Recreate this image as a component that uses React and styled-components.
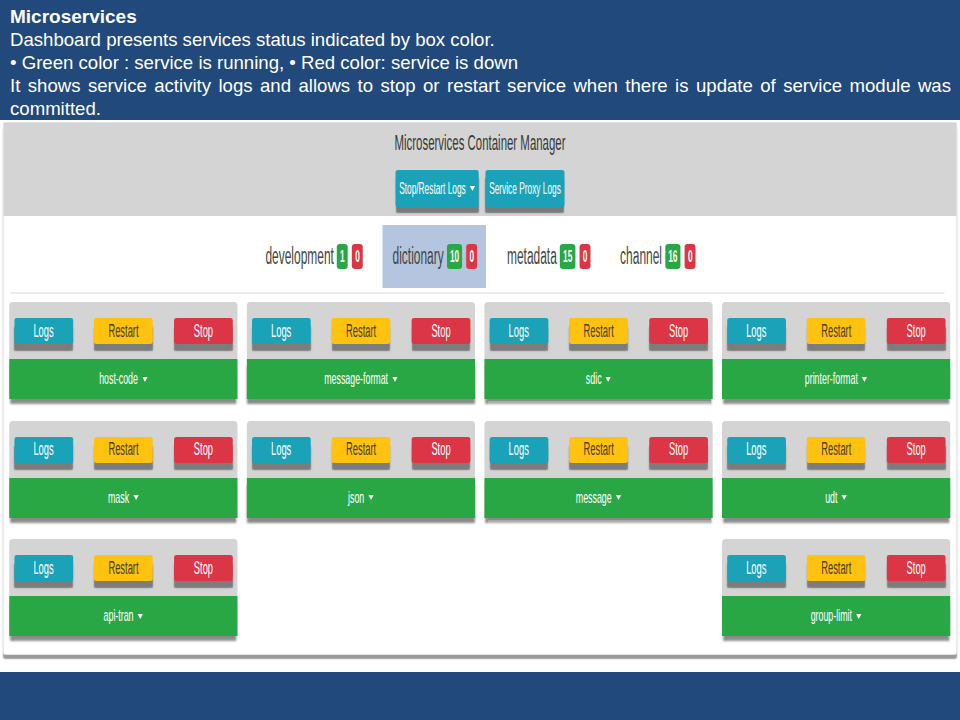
import styled, { createGlobalStyle } from "styled-components";

const GlobalStyle = createGlobalStyle`
  html, body {
    margin: 0;
    padding: 0;
    background: #ffffff;
  }
`;

// the dashboard capture in the slide is squeezed horizontally,
// so the frame is laid out wide and scaled down on x
const SQUEEZE = 954 / 1835;

const Page = styled.div`
  width: 960px;
  height: 720px;
  display: flex;
  flex-direction: column;
  overflow: hidden;
  font-family: "Liberation Sans", Arial, sans-serif;
`;

const Banner = styled.div`
  height: 120px;
  box-sizing: border-box;
  padding: 5px 9px 0 10px;
  background: #21497b;
  color: #ffffff;
  font-size: 18.6px;
  line-height: 23px;
`;

const BannerTitle = styled.div`
  font-weight: bold;
  font-size: 19px;
`;

const Justified = styled.div`
  text-align: justify;
`;

const Shot = styled.div`
  flex: 1;
  background: #ffffff;
  padding: 2px 3px 0 3px;
`;

const Squeeze = styled.div`
  width: 954px;
`;

const Frame = styled.div`
  width: 1835px;
  box-sizing: border-box;
  transform: scaleX(${SQUEEZE});
  transform-origin: 0 0;
  background: #ffffff;
  border: 1px solid #e2e2e2;
  border-radius: 6px / 3px;
  padding-bottom: 18px;
  box-shadow: 0 5px 2px -1px #9a9a9a;
`;

const Header = styled.div`
  height: 93px;
  background: #d4d4d4;
  display: flex;
  flex-direction: column;
  align-items: center;
  padding-top: 7px;
  box-sizing: border-box;
`;

const HeaderTitle = styled.div`
  font-size: 22px;
  line-height: 26px;
  color: #3a3a3a;
`;

const HeaderButtons = styled.div`
  display: flex;
  gap: 13px;
  margin-top: 14px;
`;

const TealButton = styled.div`
  height: 37px;
  padding: 0 7px;
  display: flex;
  align-items: center;
  background: #1aa2b8;
  color: #ffffff;
  font-size: 16px;
  border-radius: 5px / 2px;
  box-shadow: 0 7px 2px -1px #7a7a7a;
`;

const Tabs = styled.div`
  display: flex;
  justify-content: center;
  gap: 21px;
  margin-top: 9px;
`;

const Tab = styled.div`
  height: 63px;
  display: flex;
  align-items: center;
  gap: 8px;
  padding: 0 17px 0 19px;
  background: ${(p) => (p.$active ? "#b4c6df" : "transparent")};
  color: #454545;
  font-size: 23px;
`;

const TabLabel = styled.span`
  margin-right: -2px;
`;

const Badge = styled.span`
  height: 25px;
  padding: 0 6px;
  display: inline-flex;
  align-items: center;
  justify-content: center;
  border-radius: 6px / 3px;
  background: ${(p) => (p.$tone === "red" ? "#dc3545" : "#28a745")};
  color: #ffffff;
  font-size: 16px;
  font-weight: bold;
`;

const Divider = styled.div`
  height: 2px;
  margin: 4px 23px 0 13px;
  background: #ececec;
`;

const Grid = styled.div`
  display: grid;
  grid-template-columns: repeat(4, 438.5px);
  column-gap: 18.5px;
  row-gap: 21.5px;
  padding: 8px 0 0 11px;
`;

const Card = styled.div`
  display: flex;
  flex-direction: column;
`;

const CardTop = styled.div`
  height: 57px;
  box-sizing: border-box;
  padding: 16px 8.5px 0 9.5px;
  background: #d4d4d4;
  border-radius: 7px 7px 0 0 / 4px 4px 0 0;
  display: flex;
  justify-content: space-between;
  align-items: flex-start;
`;

const ActionButton = styled.div`
  width: 113px;
  height: 26px;
  display: flex;
  align-items: center;
  justify-content: center;
  border-radius: 5px / 2px;
  background: ${(p) => p.$bg};
  color: ${(p) => p.$fg};
  font-size: 18px;
  box-shadow: 0 8px 2px -1px #7c7c7c;
`;

const ServiceBar = styled.div`
  height: 40px;
  display: flex;
  align-items: center;
  justify-content: center;
  background: #29a745;
  color: #ffffff;
  font-size: 17px;
  box-shadow: 0 6px 3px -1px #8a8a8a;
`;

const Caret = styled.span`
  width: 0;
  height: 0;
  margin-left: 8px;
  border-left: 5px solid transparent;
  border-right: 5px solid transparent;
  border-top: 5px solid #ffffff;
`;

const Footer = styled.div`
  height: 48px;
  background: #21497b;
`;

const tabs = [
  { name: "development", up: 1, down: 0 },
  { name: "dictionary", up: 10, down: 0, active: true },
  { name: "metadata", up: 15, down: 0 },
  { name: "channel", up: 16, down: 0 },
];

const services = [
  "host-code",
  "message-format",
  "sdic",
  "printer-format",
  "mask",
  "json",
  "message",
  "udt",
  "api-tran",
  null,
  null,
  "group-limit",
];

function ServiceCard({ name }) {
  return (
    <Card>
      <CardTop>
        <ActionButton $bg="#1aa2b8" $fg="#ffffff">Logs</ActionButton>
        <ActionButton $bg="#ffc20e" $fg="#4a4020">Restart</ActionButton>
        <ActionButton $bg="#dc3545" $fg="#ffffff">Stop</ActionButton>
      </CardTop>
      <ServiceBar>
        {name}
        <Caret />
      </ServiceBar>
    </Card>
  );
}

export default function App() {
  return (
    <Page>
      <GlobalStyle />
      <Banner>
        <BannerTitle>Microservices</BannerTitle>
        <div>Dashboard presents services status indicated by box color.</div>
        <div>• Green color : service is running, • Red color: service is down</div>
        <Justified>
          It shows service activity logs and allows to stop or restart service when there is update of service
          module was committed.
        </Justified>
      </Banner>
      <Shot>
        <Squeeze>
          <Frame>
            <Header>
              <HeaderTitle>Microservices Container Manager</HeaderTitle>
              <HeaderButtons>
                <TealButton>
                  Stop/Restart Logs
                  <Caret />
                </TealButton>
                <TealButton>Service Proxy Logs</TealButton>
              </HeaderButtons>
            </Header>
            <Tabs>
              {tabs.map((t) => (
                <Tab key={t.name} $active={t.active}>
                  <TabLabel>{t.name}</TabLabel>
                  <Badge>{t.up}</Badge>
                  <Badge $tone="red">{t.down}</Badge>
                </Tab>
              ))}
            </Tabs>
            <Divider />
            <Grid>
              {services.map((s, i) => (s ? <ServiceCard key={i} name={s} /> : <div key={i} />))}
            </Grid>
          </Frame>
        </Squeeze>
      </Shot>
      <Footer />
    </Page>
  );
}
